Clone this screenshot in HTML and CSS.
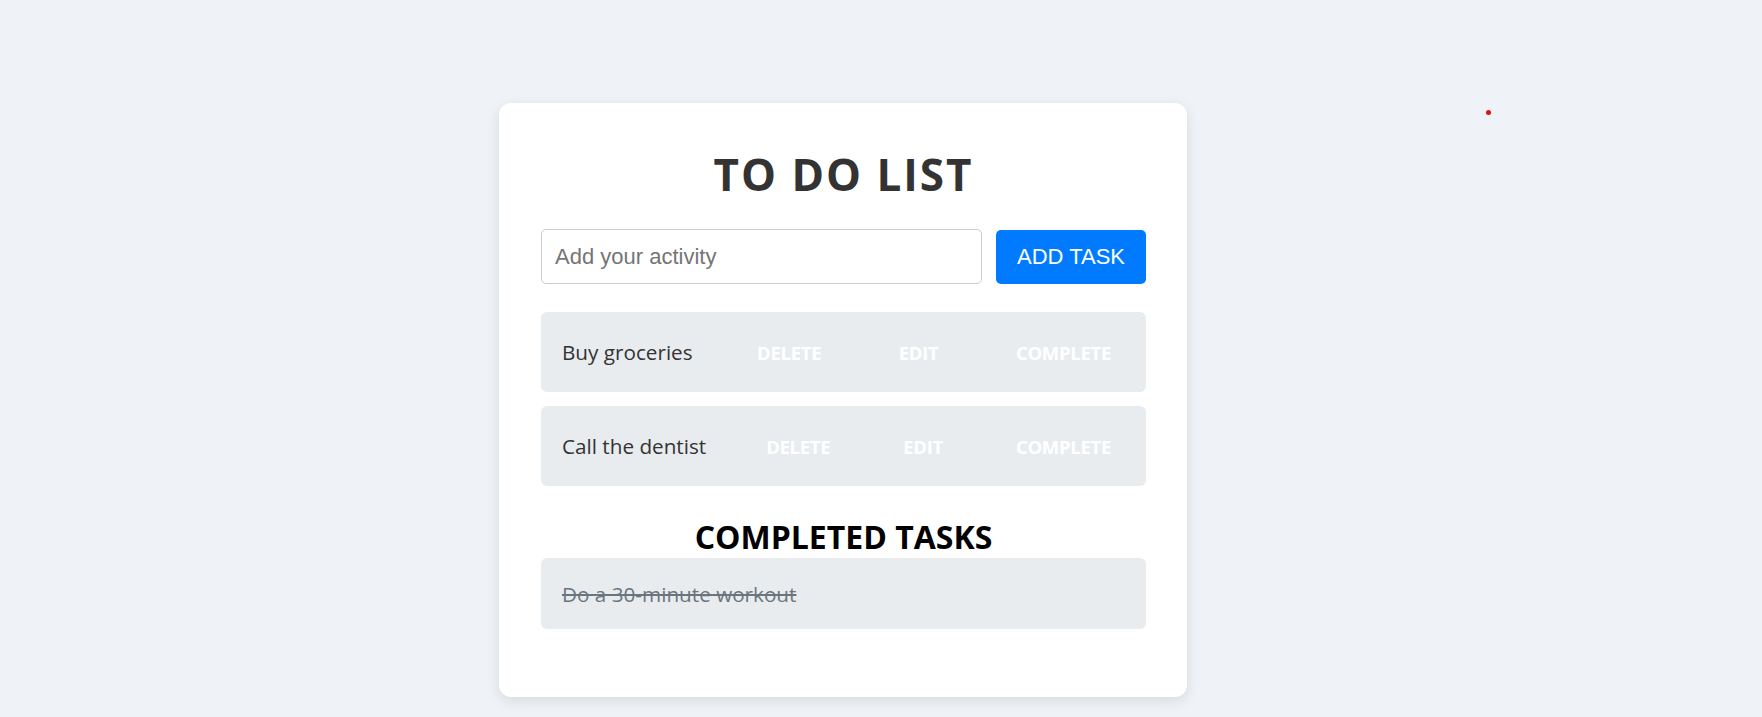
FILE: index.html
```html
<!DOCTYPE html>
<html lang="en">
<head>
<meta charset="utf-8">
<title>To Do List</title>
<link rel="stylesheet" href="styles.css">
</head>
<body>
<div class="page">
  <div class="card">
    <h1 class="title">TO DO LIST</h1>
    <div class="add-row">
      <input class="task-input" type="text" placeholder="Add your activity">
      <button class="add-btn">ADD TASK</button>
    </div>
    <ul class="list">
      <li class="task">
        <span class="task-text">Buy groceries</span>
        <button class="act">DELETE</button>
        <button class="act">EDIT</button>
        <button class="act">COMPLETE</button>
      </li>
      <li class="task">
        <span class="task-text">Call the dentist</span>
        <button class="act">DELETE</button>
        <button class="act">EDIT</button>
        <button class="act">COMPLETE</button>
      </li>
    </ul>
    <h2 class="done-title">COMPLETED TASKS</h2>
    <ul class="list done-list">
      <li class="done">
        <span class="done-text">Do a 30-minute workout</span>
      </li>
    </ul>
  </div>
</div>
<div class="dot"></div>
</body>
</html>
```
FILE: styles.css
```css
* { box-sizing: border-box; }
html, body { margin: 0; padding: 0; }
body {
  background: #eff2f6;
  font-family: "Open Sans", "Noto Sans", sans-serif;
  min-height: 717px;
}
.page {
  display: flex;
  justify-content: center;
  padding-top: 103px;
  padding-right: 76px;
}
.card {
  width: 688px;
  background: #ffffff;
  border-radius: 12px;
  box-shadow: 0 4px 14px rgba(0, 0, 0, 0.1);
  padding: 41px 41px 41px 42px;
}
.title {
  margin: 0 0 25px;
  text-align: center;
  font-size: 44px;
  line-height: 60px;
  font-weight: 700;
  color: #333333;
  letter-spacing: 2px;
}
.add-row {
  display: flex;
  gap: 14px;
  align-items: center;
}
.task-input {
  flex: 1;
  height: 55px;
  border: 1px solid #cccccc;
  border-radius: 5px;
  padding: 0 13px;
  font-family: "Liberation Sans", Arial, sans-serif;
  font-size: 22px;
  color: #333;
  outline: none;
}
.task-input::placeholder { color: #757575; }
.add-btn {
  width: 150px;
  height: 54px;
  border: none;
  border-radius: 5px;
  background: #007bff;
  color: #ffffff;
  font-family: "Liberation Sans", Arial, sans-serif;
  font-size: 22px;
  padding: 0;
}
.list {
  list-style: none;
  margin: 28px 0 0;
  padding: 0;
}
.task {
  display: flex;
  justify-content: space-between;
  align-items: center;
  height: 80px;
  padding: 0 22px 0 21px;
  background: #e9ecef;
  border-radius: 6px;
  margin-bottom: 14px;
}
.task:last-child { margin-bottom: 0; }
.task-text {
  font-size: 20.7px;
  color: #333333;
}
.act {
  border: none;
  background: transparent;
  color: #ffffff;
  font-family: "Open Sans", "Noto Sans", sans-serif;
  font-weight: 700;
  font-size: 18.5px;
  letter-spacing: -0.3px;
  padding: 0 13px;
}
.done-title {
  margin: 30px 0 0;
  text-align: center;
  font-size: 32px;
  line-height: 42px;
  font-weight: 700;
  color: #000000;
}
.done-list { margin: 0 0 27px; }
.done {
  display: flex;
  align-items: center;
  height: 71px;
  padding: 0 21px;
  background: #e9ecef;
  border-radius: 6px;
}
.done-text {
  font-size: 20.7px;
  color: #6c757d;
  text-decoration: line-through;
}
.dot {
  position: absolute;
  left: 1486px;
  top: 110px;
  width: 5px;
  height: 5px;
  border-radius: 50%;
  background: #e01010;
}
```
